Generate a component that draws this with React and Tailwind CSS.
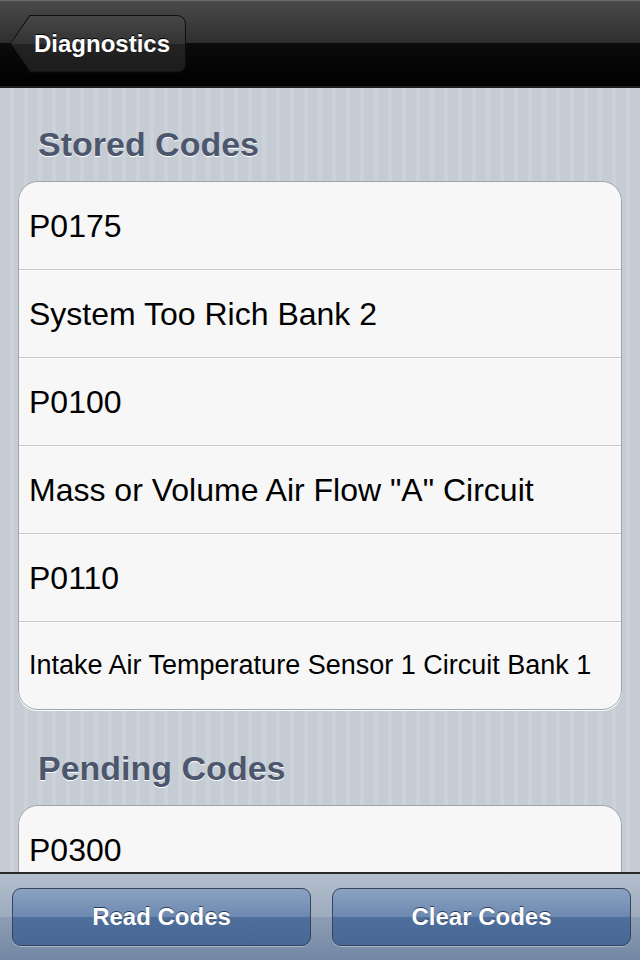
export default function App() {
  const stored = [
    { t: "P0175" },
    { t: "System Too Rich Bank 2" },
    { t: "P0100" },
    { t: 'Mass or Volume Air Flow "A" Circuit' },
    { t: "P0110" },
    { t: "Intake Air Temperature Sensor 1 Circuit Bank 1", small: true },
  ];
  const pending = [{ t: "P0300" }];

  const Card = ({ rows }) => (
    <div className="mx-[18px] rounded-[20px] border border-[#9fa4ab] bg-[#f7f7f7] shadow-[0_1px_0_#ffffff] overflow-hidden">
      {rows.map((r, i) => (
        <div
          key={i}
          className={
            (i === 0 ? "h-[87px] " : "h-[88px] border-t border-t-[#c8c8c8] shadow-[inset_0_1px_0_#ffffff] ") +
            "flex items-center pl-[10px] text-black whitespace-nowrap overflow-hidden " +
            (r.small ? "text-[27px]" : "text-[32px]")
          }
        >
          {r.t}
        </div>
      ))}
    </div>
  );

  const Heading = ({ children, className }) => (
    <div
      className={
        "pl-[38px] h-[36px] leading-[36px] text-[34px] font-bold text-[#4c566c] [text-shadow:0_1px_0_#ffffff] " +
        (className || "")
      }
    >
      {children}
    </div>
  );

  return (
    <div className="w-[640px] h-[960px] flex flex-col overflow-hidden font-['Liberation_Sans',Arial,sans-serif]">
      {/* Nav bar */}
      <div className="h-[88px] shrink-0 flex items-center pl-[10px] border-t border-t-[#6a6a6a] border-b-2 border-b-[#1c1c1c] bg-[linear-gradient(#4a4a4a,#2e2e2e_50%,#0b0b0b_50%,#000000)]">
        <div className="h-[58px] w-[176px] p-px rounded-r-[9px] bg-[#0e0e0e] [clip-path:polygon(20px_0,100%_0,100%_100%,20px_100%,0_50%)]">
          <div className="h-full w-full rounded-r-[8px] [clip-path:polygon(19.5px_0,100%_0,100%_100%,19.5px_100%,0_50%)] bg-[linear-gradient(#474747,#333333_50%,#232323_50%,#1c1c1c)] flex items-center pl-[23px]">
            <span className="text-white font-bold text-[24px] leading-none [text-shadow:0_-1px_0_#000000]">Diagnostics</span>
          </div>
        </div>
      </div>

      {/* Content */}
      <div className="flex-1 overflow-hidden bg-[repeating-linear-gradient(90deg,#c5ccd4_0px,#c5ccd4_10px,#cbd2d9_10px,#cbd2d9_14px)] pt-[38px]">
        <Heading>Stored Codes</Heading>
        <div className="mt-[19px]">
          <Card rows={stored} />
        </div>
        <Heading className="mt-[40px]">Pending Codes</Heading>
        <div className="mt-[19px]">
          <Card rows={pending} />
        </div>
      </div>

      {/* Toolbar */}
      <div className="h-[88px] shrink-0 border-t-2 border-t-[#2b2b2b] bg-[linear-gradient(#b4bfcd,#9dabbe_50%,#8d9db4_50%,#7488a4)] flex items-center pl-[12px] pr-[9px] gap-[21px]">
        <div className="w-[299px] h-[58px] rounded-[9px] border border-[#34445e] shadow-[0_1px_0_rgba(255,255,255,0.35)] bg-[linear-gradient(#8ba2c2,#6d89b0_50%,#4e6e9c_50%,#476794)] flex items-center justify-center">
          <span className="text-white font-bold text-[24px] leading-none [text-shadow:0_-1px_0_#2a3c58]">Read Codes</span>
        </div>
        <div className="w-[299px] h-[58px] rounded-[9px] border border-[#34445e] shadow-[0_1px_0_rgba(255,255,255,0.35)] bg-[linear-gradient(#8ba2c2,#6d89b0_50%,#4e6e9c_50%,#476794)] flex items-center justify-center">
          <span className="text-white font-bold text-[24px] leading-none [text-shadow:0_-1px_0_#2a3c58]">Clear Codes</span>
        </div>
      </div>
    </div>
  );
}
